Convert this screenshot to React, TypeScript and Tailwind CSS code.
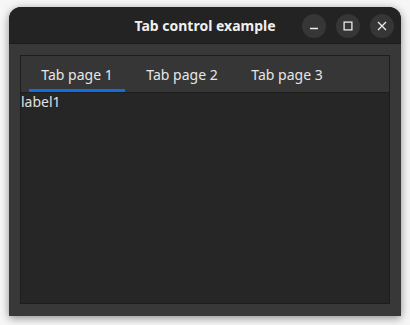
const FONT = { fontFamily: '"Noto Sans", "DejaVu Sans", sans-serif' };

function TitleButton({ children }: { children: React.ReactNode }) {
  return (
    <div className="flex h-6 w-6 items-center justify-center rounded-full bg-[#363636] text-[#ececec]">
      {children}
    </div>
  );
}

export default function App() {
  const tabs = ["Tab page 1", "Tab page 2", "Tab page 3"];
  return (
    <div className="h-[325px] w-[410px] bg-[#f6f6f6] pl-[9px] pt-[7px]" style={FONT}>
      <div className="flex h-[309px] w-[392px] flex-col overflow-hidden rounded-t-[12px] bg-[#383838] shadow-[0_2px_9px_rgba(0,0,0,0.45)]">
        {/* header bar */}
        <div className="relative flex h-[37px] shrink-0 items-center justify-center border-b border-[#1c1c1c] bg-[#232323]">
          <span className="text-[14px] font-bold text-[#f0f0f0]">Tab control example</span>
          <div className="absolute right-[7px] top-[7px] flex gap-[10px]">
            <TitleButton>
              <svg width="10" height="10" viewBox="0 0 10 10">
                <path d="M1 7.5h8" stroke="currentColor" strokeWidth="1.3" />
              </svg>
            </TitleButton>
            <TitleButton>
              <svg width="10" height="10" viewBox="0 0 10 10">
                <rect x="1.1" y="1.1" width="7.8" height="7.8" fill="none" stroke="currentColor" strokeWidth="1.3" />
              </svg>
            </TitleButton>
            <TitleButton>
              <svg width="10" height="10" viewBox="0 0 10 10">
                <path d="M1 1l8 8M9 1l-8 8" stroke="currentColor" strokeWidth="1.3" />
              </svg>
            </TitleButton>
          </div>
        </div>

        <div className="flex flex-1 flex-col p-[11px] pb-[12px]">
          <div className="flex flex-1 flex-col border border-[#1d1d1d] bg-[#262626]">
            <div className="flex h-[37px] shrink-0 gap-[9px] border-b border-[#1d1d1d] bg-[#363636] pl-[8px]">
              {tabs.map((t, i) => (
                <div
                  key={t}
                  className={
                    i === 0
                      ? "flex w-[96px] items-center justify-center border-b-[3px] border-[#0f6fe0] pt-[3px] text-[14px] text-[#e6e6e6]"
                      : "flex w-[96px] items-center justify-center border-b-[3px] border-transparent pt-[3px] text-[14px] text-[#e6e6e6]"
                  }
                >
                  {t}
                </div>
              ))}
            </div>
            <div className="text-[14px] leading-[18px] text-[#e0e0e0]">label1</div>
          </div>
        </div>
      </div>
    </div>
  );
}
